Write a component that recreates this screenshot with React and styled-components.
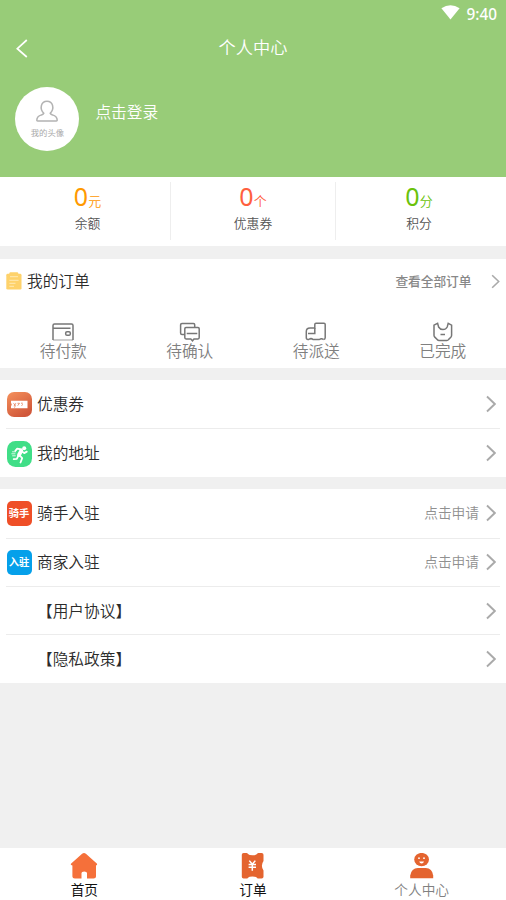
import React from 'react';
import styled, { createGlobalStyle } from 'styled-components';

const STATS = [
  { label: '余额', value: 0, unit: '元', color: '#ff9900' },
  { label: '优惠券', value: 0, unit: '个', color: '#ff5f3e' },
  { label: '积分', value: 0, unit: '分', color: '#6ac20b' },
];

const WalletIcon = () => (
  <StateIcon viewBox="0 0 24 20">
    <path d="M2 18V3.5Q2 2 3.5 2H20.5Q22 2 22 3.5V18M2 6.2H19.5" />
    <path d="M2 18H22" strokeWidth="0.7" />
    <rect x="14.7" y="9.8" width="4.6" height="3.4" rx="1.3" />
  </StateIcon>
);

const ChatIcon = () => (
  <StateIcon viewBox="0 0 24 20">
    <path d="M7 12.5H4Q2.6 12.5 2.6 11V2.7Q2.6 1.5 4 1.5H15.5Q16.7 1.5 16.7 2.7V5.4" />
    <path d="M8 5.5H20Q21.2 5.5 21.2 6.7V15.6Q21.2 17 20 17H16L14.5 18.8L12.8 17H8Q6.8 17 6.8 15.6V6.7Q6.8 5.5 8 5.5ZM8.7 11.5H19.3" />
  </StateIcon>
);

const TruckIcon = () => (
  <StateIcon viewBox="0 0 24 20">
    <path d="M5 17.5H4Q2.3 17.5 2.3 15.8V9.5Q2.3 6 6 6H10.8V2.5Q10.8 1.2 12 1.2H20Q21.2 1.2 21.2 2.5V15.8Q21.2 17.5 19.5 17.5" />
    <path d="M4 11.6H10.8V6M5 17.5Q7 15.8 9 17.5H15.3Q17.5 15.8 19.5 17.5" />
  </StateIcon>
);

const BagIcon = () => (
  <StateIcon viewBox="0 0 24 20">
    <path d="M3 3.2L6.6 1.4L7.6 5Q9.2 7.6 12 7.6Q14.8 7.6 16.2 5L17.2 1.4L20.6 3.2V13.2Q20.6 14.3 19.8 15.2L17.6 17.5Q17 18.6 15.8 18.6H8Q7 18.6 6.2 17.5L3.8 15.1Q3 14.3 3 13.2ZM9.5 12.4H14" />
  </StateIcon>
);

const ORDER_STATES = [
  { label: '待付款', Icon: WalletIcon },
  { label: '待确认', Icon: ChatIcon },
  { label: '待派送', Icon: TruckIcon },
  { label: '已完成', Icon: BagIcon },
];

const CouponIcon = () => (
  <svg width="25" height="25" viewBox="0 0 25 25">
    <defs>
      <linearGradient id="couponBg" x1="0" y1="0" x2="0.6" y2="1">
        <stop offset="0" stopColor="#f5915c" />
        <stop offset="1" stopColor="#d0573a" />
      </linearGradient>
    </defs>
    <rect width="25" height="25" rx="7" fill="url(#couponBg)" />
    <path d="M4 8.8H20.5V16.2H4V14.2Q5.6 12.5 4 10.8Z" fill="#fff" />
    <path d="M6.5 11.2L8.6 13.8M8.8 11.2L7 14.2M10.5 11.3H12.5L10.7 13.7M14 11.2H15.8M14.4 13.6L16 12.4M7 15.3L8.5 14.6" stroke="#e27c55" strokeWidth="0.8" fill="none" />
  </svg>
);

const RunnerIcon = () => (
  <svg width="25" height="26" viewBox="0 0 25 26">
    <rect width="25" height="26" rx="8.5" fill="#40de87" />
    <circle cx="17.2" cy="7.3" r="2" fill="#fff" />
    <g fill="none" stroke="#fff" strokeLinecap="round" strokeLinejoin="round">
      <path d="M14.2 9.8L12 14" strokeWidth="3.8" />
      <path d="M14.5 8.5L10.2 7.6L8.3 9.8M15 10.6L17.2 12.1L19.8 10.6M12.8 14.5L15.2 17.2L13.5 21.5M11.4 14.6L9.8 17.8L6.7 18.1" strokeWidth="1.8" />
      <path d="M5.5 10.8H8.5M4.8 12.8H8M5.6 14.8H8.3" strokeWidth="0.8" />
    </g>
  </svg>
);

const Chevron = ({ small }) => (
  <Arrow $small={small} viewBox="0 0 10 18">
    <path d="M1 1.5L8.8 9L1 16.5" />
  </Arrow>
);

const SERVICES = [
  { label: '优惠券', icon: <CouponIcon /> },
  { label: '我的地址', icon: <RunnerIcon /> },
];

const JOIN_ITEMS = [
  { label: '骑手入驻', badge: { text: '骑手', color: '#ef4f27' }, hint: '点击申请' },
  { label: '商家入驻', badge: { text: '入驻', color: '#05a0ea' }, hint: '点击申请' },
  { label: '【用户协议】' },
  { label: '【隐私政策】' },
];

const MenuList = ({ items }) => (
  <Section>
    {items.map(({ label, icon, badge, hint }) => (
      <MenuRow key={label}>
        <MenuIcon>
          {icon}
          {badge && <WordIcon $color={badge.color}>{badge.text}</WordIcon>}
        </MenuIcon>
        <MenuLabel>{label}</MenuLabel>
        {hint && <MenuHint>{hint}</MenuHint>}
        <Chevron />
      </MenuRow>
    ))}
  </Section>
);

const App = () => {
  return (
    <Page>
      <GlobalStyle />
      <Header>
        <StatusBar>
          <svg width="19" height="15" viewBox="0 0 19 15">
            <path d="M0.4 3.2Q9.5 -2.6 18.6 3.2L9.5 14.6Z" fill="#fff" />
          </svg>
          <Clock>9:40</Clock>
        </StatusBar>
        <NavBar>
          <BackButton aria-label="返回">
            <svg width="12" height="19" viewBox="0 0 12 19">
              <path d="M10.8 1L1.3 9.7L10.8 18" fill="none" stroke="#fff" strokeWidth="1.7" />
            </svg>
          </BackButton>
          <Title>个人中心</Title>
        </NavBar>
        <Profile>
          <Avatar>
            <svg width="22" height="22" viewBox="0 0 22 22">
              <path d="M7.8 13.3C3.2 8.5 5 1.2 11 1.2S18.8 8.5 14.2 13.3Q14.5 14.4 16.5 14.9Q21.2 16.4 21.2 20.3Q21.2 21 20.4 21H1.6Q0.8 21 0.8 20.3Q0.8 16.4 5.5 14.9Q7.5 14.4 7.8 13.3Z" fill="none" stroke="#b3b3b3" strokeWidth="1.5" />
            </svg>
            <AvatarText>我的头像</AvatarText>
          </Avatar>
          <LoginText>点击登录</LoginText>
        </Profile>
      </Header>

      <Stats>
        {STATS.map((stat) => (
          <Stat key={stat.label}>
            <StatValue $color={stat.color}>
              {stat.value}
              <small>{stat.unit}</small>
            </StatValue>
            <StatLabel>{stat.label}</StatLabel>
          </Stat>
        ))}
      </Stats>

      <Section>
        <OrderHead>
          <svg width="16" height="18" viewBox="0 0 16 18">
            <rect x="0.3" y="1.8" width="15.2" height="15.8" rx="1.4" fill="#fed26b" />
            <rect x="3.4" y="0.2" width="8.8" height="4" rx="1" fill="#fed26b" />
            <path d="M4 4.7H12M3.4 8.3H12.6M3.4 11.3H9.5M3.4 14.3H8" stroke="#ffedbd" strokeWidth="0.9" />
          </svg>
          <OrderTitle>我的订单</OrderTitle>
          <ViewAll>查看全部订单</ViewAll>
          <Chevron small />
        </OrderHead>
        <OrderStates>
          {ORDER_STATES.map(({ label, Icon }) => (
            <OrderState key={label}>
              <Icon />
              <span>{label}</span>
            </OrderState>
          ))}
        </OrderStates>
      </Section>

      <MenuList items={SERVICES} />
      <MenuList items={JOIN_ITEMS} />

      <TabBar>
        <Tab>
          <svg width="28" height="27" viewBox="0 0 28 27">
            <path d="M12.1 0.8Q14 -0.6 15.9 0.8L26.8 10.5Q27.8 11.6 26 12.6V23.6Q26 25.5 23.6 25.5H17V20Q17 18.4 14.2 18.4Q11.5 18.4 11.5 20V25.5H4.8Q2.4 25.5 2.4 23.6V12.6Q-0.2 11.8 1.2 10.5Z" fill="#f5703a" />
          </svg>
          <TabLabel>首页</TabLabel>
        </Tab>
        <Tab>
          <svg width="28" height="27" viewBox="0 0 28 27">
            <path d="M4.6 0H7.5Q8.5 0 9 0.9Q10 2.2 13.5 2.2Q17 2.2 18 0.9Q18.5 0 19.5 0H22.6Q24.5 0 24.5 1.8V8Q22.9 10.3 22.9 12.8Q22.9 15.3 24.5 17.6V23.8Q24.5 25.6 22.6 25.6H19.5Q18.5 25.6 18 24.7Q17 23.4 13.5 23.4Q10 23.4 9 24.7Q8.5 25.6 7.5 25.6H4.6Q2.8 25.6 2.8 23.8V1.8Q2.8 0 4.6 0Z" fill="#e4642f" />
            <path d="M10.3 7.6L13.3 11.3L16.3 7.6M9.6 11.6H17M9.6 14.3H17M13.3 11V17.8" stroke="#fff" strokeWidth="1.5" fill="none" />
          </svg>
          <TabLabel>订单</TabLabel>
        </Tab>
        <Tab>
          <svg width="28" height="27" viewBox="0 0 28 27">
            <ellipse cx="13.6" cy="6.6" rx="7.4" ry="6.7" fill="#e4642f" />
            <circle cx="11" cy="5.2" r="0.9" fill="#fff" />
            <circle cx="16" cy="5.2" r="0.9" fill="#fff" />
            <path d="M11.2 8.4H16Q15.5 10.4 13.6 10.4Q11.7 10.4 11.2 8.4Z" fill="#fff" />
            <path d="M2.2 25.3V22.5Q3.4 15 9.9 15H17.7Q24.2 15 25.2 22.5V25.3Z" fill="#e4642f" />
          </svg>
          <TabLabel $muted>个人中心</TabLabel>
        </Tab>
      </TabBar>
    </Page>
  );
};

export default App;

const GlobalStyle = createGlobalStyle`
  * {
    box-sizing: border-box;
  }

  body {
    margin: 0;
    font-family: Roboto, "Noto Sans CJK SC", sans-serif;
    font-weight: 350;
    color: #2b2b2b;
    background-color: #f0f0f0;
  }

  svg {
    display: block;
    flex-shrink: 0;
  }
`;

const Page = styled.div`
  display: flex;
  flex-direction: column;
  gap: 12.5px;
  height: 900px;
  overflow: hidden;
`;

const Header = styled.header`
  height: 177px;
  margin-bottom: -12.5px;
  background-color: #98cc78;
  color: #fff;
`;

const StatusBar = styled.div`
  display: flex;
  align-items: center;
  justify-content: flex-end;
  gap: 7px;
  height: 26px;
  padding: 0 9px 1px 0;
`;

const Clock = styled.span`
  font-family: "Noto Sans", sans-serif;
  font-size: 15.3px;
  font-weight: 500;
  line-height: 20px;
  padding-top: 2px;
`;

const NavBar = styled.div`
  display: grid;
  grid-template-columns: 40px 1fr 40px;
  align-items: center;
  height: 44px;
`;

const BackButton = styled.button`
  padding: 0 0 0 16px;
  border: 0;
  background: none;
`;

const Title = styled.h1`
  margin: 0;
  font-size: 17.2px;
  font-weight: inherit;
  line-height: 24px;
  text-align: center;
`;

const Profile = styled.div`
  display: flex;
  gap: 16px;
  padding: 17.3px 15.4px 0;
`;

const Avatar = styled.div`
  display: flex;
  flex-direction: column;
  align-items: center;
  width: 64px;
  height: 64px;
  padding-top: 13px;
  border-radius: 50%;
  background-color: #fff;
`;

const AvatarText = styled.span`
  margin-top: 5px;
  font-size: 8.4px;
  font-weight: 400;
  line-height: 12px;
  color: #aaa;
`;

const LoginText = styled.span`
  padding-top: 13.4px;
  font-size: 15.7px;
  line-height: 24px;
`;

const Stats = styled.section`
  display: grid;
  grid-template-columns: 171px 165px 1fr;
  height: 69px;
  padding: 5px 0 6px;
  background-color: #fff;
`;

const Stat = styled.div`
  display: flex;
  flex-direction: column;
  align-items: center;
  padding-left: 5px;

  & + & {
    padding-left: 0;
  }

  &:not(:last-child) {
    border-right: 1px solid #eee;
  }

  &:last-child {
    padding-right: 4px;
  }
`;

const StatValue = styled.div`
  height: 30px;
  font-family: "Noto Sans", "Noto Sans CJK SC", sans-serif;
  font-size: 25px;
  font-weight: 400;
  line-height: 28px;
  color: ${({ $color }) => $color};
  white-space: nowrap;

  small {
    font-size: 13px;
    font-weight: 350;
  }
`;

const StatLabel = styled.span`
  margin-top: 2px;
  font-size: 12.8px;
  line-height: 20px;
  color: #555;
`;

const Section = styled.section`
  background-color: #fff;
`;

const OrderHead = styled.div`
  display: flex;
  align-items: center;
  height: 45px;
  padding: 0 6px;
`;

const OrderTitle = styled.h2`
  flex: 1;
  margin: 0 0 2px 5px;
  font-size: 15.7px;
  font-weight: inherit;
`;

const ViewAll = styled.span`
  margin: 0 19.5px 2px 0;
  font-size: 12.7px;
  font-weight: 500;
  color: #888;
`;

const Arrow = styled.svg`
  width: ${({ $small }) => ($small ? '9px' : '10px')};
  height: ${({ $small }) => ($small ? '15px' : '18px')};
  fill: none;
  stroke: #aaa;
  stroke-width: 1.9;
`;

const OrderStates = styled.div`
  display: grid;
  grid-template-columns: repeat(4, 1fr);
  height: 64px;
  padding-top: 18px;
`;

const OrderState = styled.div`
  display: flex;
  flex-direction: column;
  align-items: center;
  font-size: 15.7px;
  line-height: 22px;
  color: #808080;
`;

const StateIcon = styled.svg`
  width: 24px;
  height: 20px;
  margin-bottom: -1px;
  fill: none;
  stroke: #777;
  stroke-width: 1.5;
`;

const MenuRow = styled.div`
  display: flex;
  align-items: center;
  height: 48.4px;
  margin: 0 6px;
  padding-right: 4px;

  & + & {
    border-top: 1px solid #ececec;
  }
`;

const MenuIcon = styled.div`
  width: 25px;
  margin: 1px 5.5px 0 0.5px;
`;

const MenuLabel = styled.span`
  flex: 1;
  padding-top: 2px;
  font-size: 15.7px;
  line-height: 24px;
`;

const MenuHint = styled.span`
  margin: 0 7px 3px 0;
  font-size: 13.7px;
  color: #909090;
`;

const WordIcon = styled.div`
  display: flex;
  align-items: center;
  justify-content: center;
  width: 25px;
  height: 25px;
  border-radius: 5px;
  background-color: ${({ $color }) => $color};
  color: #fff;
  font-size: 10.3px;
  font-weight: 700;
  line-height: 25px;
  white-space: nowrap;
`;

const TabBar = styled.nav`
  display: grid;
  grid-template-columns: repeat(3, 1fr);
  height: 52px;
  margin-top: auto;
  background-color: #fff;
`;

const Tab = styled.div`
  display: flex;
  flex-direction: column;
  align-items: center;
  padding-top: 5px;
`;

const TabLabel = styled.span`
  font-size: 13.7px;
  font-weight: ${({ $muted }) => ($muted ? 350 : 400)};
  line-height: 20px;
  color: ${({ $muted }) => ($muted ? '#808080' : '#111')};
`;
